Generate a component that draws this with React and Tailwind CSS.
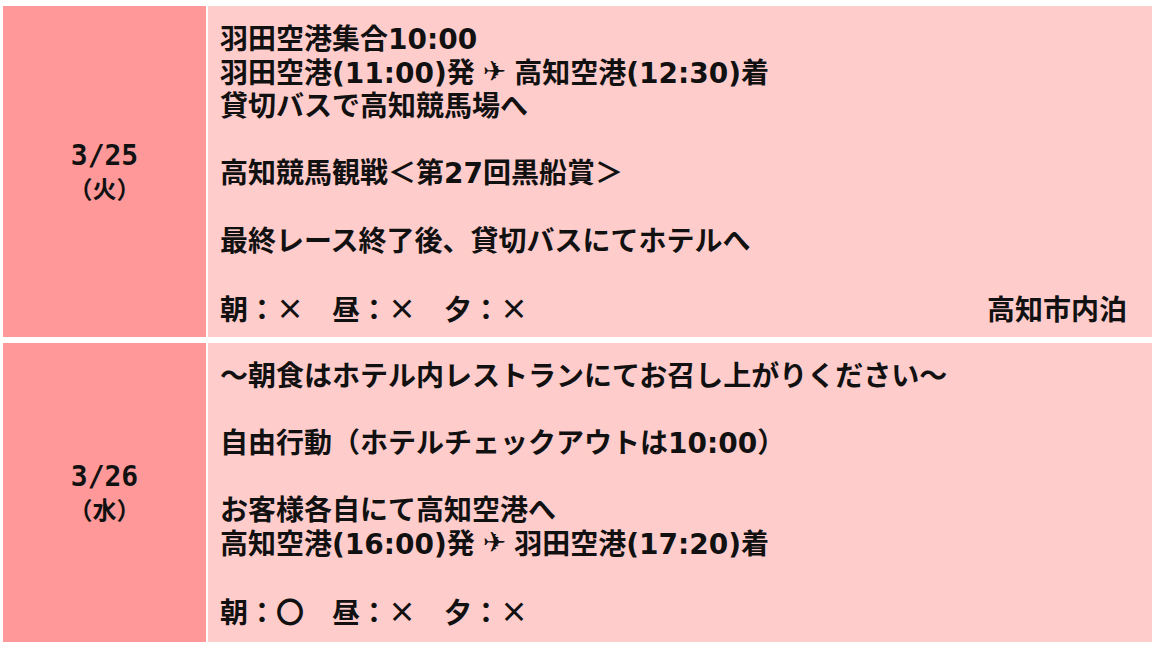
import React from 'react';

const rows = [
  {
    date: '3/25',
    day: '（火）',
    height: 'h-[331px]',
    lines: [
      '羽田空港集合10:00',
      'FLIGHT1',
      '貸切バスで高知競馬場へ',
      '',
      '高知競馬観戦＜第27回黒船賞＞',
      '',
      '最終レース終了後、貸切バスにてホテルへ',
      '',
    ],
    meals: '朝：×　昼：×　夕：×',
    stay: '高知市内泊',
  },
  {
    date: '3/26',
    day: '（水）',
    height: 'h-[299px]',
    lines: [
      '～朝食はホテル内レストランにてお召し上がりください～',
      '',
      '自由行動（ホテルチェックアウトは10:00）',
      '',
      'お客様各自にて高知空港へ',
      'FLIGHT2',
      '',
    ],
    meals: '朝：〇　昼：×　夕：×',
    stay: '',
  },
];

const Plane = () => (
  <span className="inline-block align-middle mx-[8px] -mt-[6px] text-[28px] font-normal font-['DejaVu_Sans',sans-serif]">
    ✈
  </span>
);

const Line = ({ text }) => {
  if (text === '') return <div className="h-[33.6px]" />;
  if (text === 'FLIGHT1')
    return (
      <div>
        羽田空港(11:00)発<Plane />高知空港(12:30)着
      </div>
    );
  if (text === 'FLIGHT2')
    return (
      <div>
        高知空港(16:00)発<Plane />羽田空港(17:20)着
      </div>
    );
  return <div>{text}</div>;
};

export default function App() {
  return (
    <div className="bg-white min-h-[649px] pt-[6px] pl-[3px]">
      <div className="w-[1149px] flex flex-col gap-[6px]">
        {rows.map((r) => (
          <div key={r.date} className={`flex gap-[2px] ${r.height}`}>
            {/* date */}
            <div className="w-[203px] bg-[#ff9999] flex flex-col items-center justify-center gap-[2px] text-[#111] font-bold text-[28px] leading-[30px] font-['DejaVu_Sans_Mono','Noto_Sans_CJK_JP',monospace]">
              <div>{r.date}</div>
              <div className="text-[24px] font-['Noto_Sans_CJK_JP',sans-serif]">{r.day}</div>
            </div>
            {/* schedule */}
            <div className="flex-1 bg-[#ffcccc] pt-[17px] pl-[12px] pr-[25px] text-[#111] font-bold text-[28px] leading-[1.2] font-['DejaVu_Sans','Noto_Sans_CJK_JP',sans-serif]">
              {r.lines.map((l, i) => (
                <Line key={i} text={l} />
              ))}
              <div className="flex justify-between font-['Noto_Sans_CJK_JP',sans-serif]">
                <span>{r.meals}</span>
                <span>{r.stay}</span>
              </div>
            </div>
          </div>
        ))}
      </div>
    </div>
  );
}
